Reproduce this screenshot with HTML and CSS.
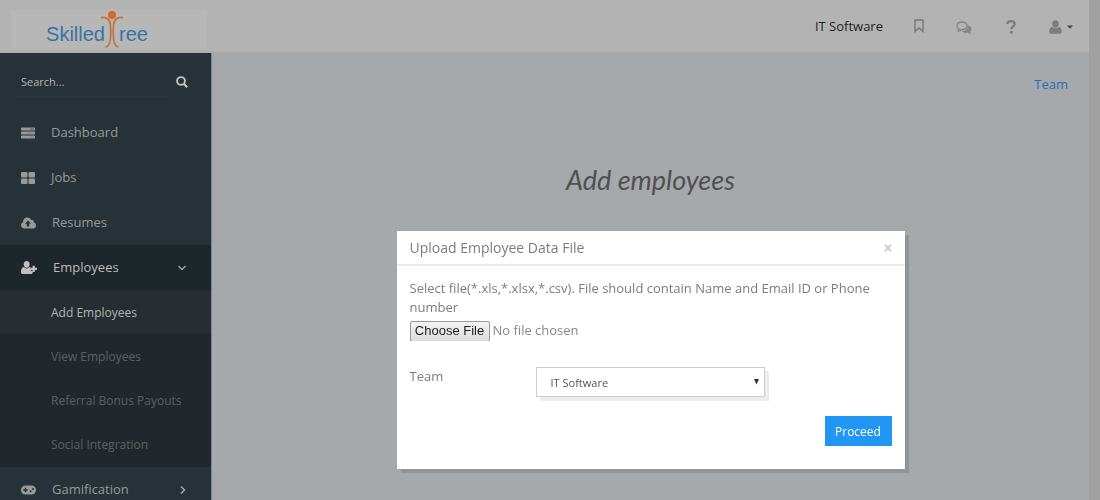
FILE: index.html
```html
<!DOCTYPE html>
<html lang="en">
<head>
<meta charset="utf-8">
<title>SkilledTree - Add employees</title>
<link rel="stylesheet" href="styles.css">
</head>
<body>
<div class="app">
  <div class="page">
    <header class="topbar">
      <a class="logo" href="#" aria-label="SkilledTree">
        <span>Skilled</span>
        <svg class="logo-figure" viewBox="0 0 22 38" aria-hidden="true">
          <circle cx="11" cy="5" r="4" fill="#d9691f"/>
          <path d="M0 7.500C5 7 8.500 9 9.300 14C10 20 10 28 8.500 33C7.500 36 6 37 4.500 37" fill="none" stroke="#c4743c" stroke-width="1.700"/>
          <path d="M22 7.500C17 7 13.500 9 12.700 14C12 20 12 28 13.500 33C14.500 36 16 37 17.500 37" fill="none" stroke="#c4743c" stroke-width="1.700"/>
        </svg>
        <span>ree</span>
      </a>
      <nav class="tools" aria-label="Account">
        <span class="org">IT Software</span>
        <a href="#" class="tool tool-mark" aria-label="Bookmarks"><svg width="10" height="14" viewBox="0 0 10 14"><path d="M1 1H9V12.500L5 9L1 12.500Z" fill="none" stroke="#777" stroke-width="1.400"/></svg></a>
        <a href="#" class="tool tool-chat" aria-label="Messages"><svg width="16" height="14" viewBox="0 0 16 14"><path d="M12.200 4.500C14.200 5 15.500 6.200 15.500 8C15.500 9.200 14.900 10.100 13.900 10.800L15 13C13.300 12.900 12.300 12.300 11.600 11.600C9 12 6.800 11.300 5.800 10.200C9.500 10.200 12.500 8 12.200 4.500Z" fill="#858585"/><path d="M6 1C3 1 1 2.700 1 4.900C1 6.300 1.800 7.300 3 8L2.100 10C3.600 9.800 4.400 9.300 5.100 8.700C8.600 9 11.200 7.300 11.200 4.900C11.200 2.700 9 1 6 1Z" fill="#b3b3b3" stroke="#858585" stroke-width="1.300"/></svg></a>
        <a href="#" class="tool tool-help" aria-label="Help"><svg width="10" height="14" viewBox="0 0 10 14"><path d="M1.200 4.200C1.500 2 3 1.200 5 1.200C7.200 1.200 8.700 2.300 8.700 4C8.700 6.600 5.300 6.400 5.300 9.300" fill="none" stroke="#7d7d7d" stroke-width="2.300"/><rect x="4" y="11" width="2.700" height="2.700" fill="#7d7d7d"/></svg></a>
        <a href="#" class="tool tool-user" aria-label="Profile"><svg width="13" height="14" viewBox="0 0 13 14"><path d="M6.500 0.300C8.500 0.300 9.800 1.800 9.800 3.900C9.800 6 8.400 7.800 6.500 7.800C4.600 7.800 3.200 6 3.200 3.900C3.200 1.800 4.500 0.300 6.500 0.300ZM3.300 6.700C4.800 8.900 8.200 8.900 9.700 6.700C12 7 12.700 9.200 12.700 11.600C12.700 13 11.900 13.800 10.700 13.800H2.300C1.100 13.800 0.300 13 0.300 11.600C0.300 9.200 1 7 3.300 6.700Z" fill="#7d7d7d"/></svg><svg width="6" height="4" viewBox="0 0 6 4"><path d="M0 0.500H6L3 3.700Z" fill="#444"/></svg></a>
      </nav>
    </header>

    <div class="columns">
      <aside class="sidebar">
        <form class="search" role="search">
          <input class="search-field" type="text" placeholder="Search..." aria-label="Search">
          <button class="search-button" type="button" aria-label="Search"><svg width="12" height="12" viewBox="0 0 12 12"><circle cx="5" cy="5" r="3.900" fill="none" stroke="#c4c4c4" stroke-width="1.900"/><path d="M8 8L11.200 11.200" stroke="#c4c4c4" stroke-width="2.200"/></svg></button>
        </form>
        <nav aria-label="Main">
          <a class="item" href="#"><svg width="14" height="12" viewBox="0 0 15 12"><g fill="#989a9a"><rect width="15" height="3.400" rx=".5"/><rect y="4.300" width="15" height="3.400" rx=".5"/><rect y="8.600" width="15" height="3.400" rx=".5"/></g><path d="M10 1.700H14" stroke="#4c565a" stroke-width="1"/><path d="M6 6H14M10 10.300H14" stroke="#858a8b" stroke-width="1"/></svg>Dashboard</a>
          <a class="item" href="#"><svg width="14" height="12" viewBox="0 0 14 12"><g fill="#989a9a"><rect width="6.500" height="5.500" rx="1"/><rect x="7.500" width="6.500" height="5.500" rx="1"/><rect y="6.500" width="6.500" height="5.500" rx="1"/><rect x="7.500" y="6.500" width="6.500" height="5.500" rx="1"/></g></svg>Jobs</a>
          <a class="item" href="#"><svg width="15" height="12" viewBox="0 0 15 12"><path d="M3.500 11.500C1.500 11.500 0 10.200 0 8.300C0 6.800 0.800 5.800 2 5.200C1.900 2.500 3.800 0.500 6.300 0.500C8.300 0.500 9.700 1.600 10.300 3.200C12 2.600 13.300 4 12.800 5.600C14.200 6 15 7.100 15 8.500C15 10.300 13.700 11.500 12 11.500Z" fill="#989a9a"/><path d="M7 3.500L10 6.700H8.200V9.500H5.800V6.700H4Z" fill="#263238"/></svg>Resumes</a>
          <a class="item item-open" href="#" aria-expanded="true"><svg width="16" height="13" viewBox="0 0 16 13"><path d="M5.700 0C7.500 0 8.700 1.300 8.700 3.200C8.700 5 7.500 6.700 5.700 6.700C4 6.700 2.700 5 2.700 3.200C2.700 1.300 4 0 5.700 0ZM2.900 6C4.500 7.900 7 7.900 8.500 6C9 6 9.400 6.200 9.700 6.500V9.700H11.700V12C11.400 12.600 10.600 13 9.800 13H1.900C0.700 13 0 12.200 0 10.900C0 8.700 0.700 6.200 2.900 6Z" fill="#c0bebe"/><path d="M12.700 4.700V11.100M9.500 7.900H16" stroke="#c0bebe" stroke-width="2.300"/></svg>Employees<svg class="arrow" width="8" height="6" viewBox="0 0 8 6"><path d="M.5 1L4 4.500L7.500 1" fill="none" stroke="#a4a7a8" stroke-width="1.300"/></svg></a>
          <div class="submenu">
            <a class="subitem current" href="#">Add Employees</a>
            <a class="subitem" href="#">View Employees</a>
            <a class="subitem" href="#">Referral Bonus Payouts</a>
            <a class="subitem" href="#">Social Integration</a>
          </div>
          <a class="item" href="#"><svg width="15" height="10" viewBox="0 0 15 10"><rect y=".5" width="15" height="9" rx="4.500" fill="#989a9a"/><path d="M4.500 2.800V7.200M2.300 5H6.700" stroke="#263238" stroke-width="1.400"/><circle cx="9.700" cy="6.300" r="1" fill="#263238"/><circle cx="12" cy="3.900" r="1" fill="#263238"/></svg>Gamification<svg class="arrow" width="6" height="8" viewBox="0 0 6 8"><path d="M1 .5L4.500 4L1 7.500" fill="none" stroke="#a4a7a8" stroke-width="1.500"/></svg></a>
        </nav>
      </aside>
      <main class="main">
        <a class="crumb" href="#">Team</a>
        <h1 class="title">Add employees</h1>
      </main>
    </div>
  </div>
  <div class="gutter"></div>
</div>

<div class="overlay">
  <section class="dialog" role="dialog" aria-labelledby="dialog-title">
    <div class="dialog-head">
      <h2 class="dialog-title" id="dialog-title">Upload Employee Data File</h2>
      <button class="close" type="button" aria-label="Close"><svg width="8" height="8" viewBox="0 0 8 8"><path d="M.8 .8L7.200 7.200M7.200 .8L.8 7.200" stroke="#c2c2c2" stroke-width="1.500"/></svg></button>
    </div>
    <form class="dialog-body">
      <label class="hint" for="file">Select file(*.xls,*.xlsx,*.csv). File should contain Name and Email ID or Phone number</label>
      <input class="file" id="file" type="file">
      <div class="field">
        <label for="team">Team</label>
        <div class="select-wrap">
          <select class="select" id="team"><option>IT Software</option></select>
          <svg class="select-arrow" width="5" height="6" viewBox="0 0 5 6" aria-hidden="true"><path d="M0 0H5L2.500 5.500Z" fill="#333"/></svg>
        </div>
      </div>
      <button class="proceed" type="button">Proceed</button>
    </form>
  </section>
</div>
</body>
</html>
```

FILE: styles.css
```css
* { box-sizing: border-box; }

body {
  margin: 0;
  font: 13px/19px "Open Sans", "Noto Sans", sans-serif;
  color: #7c7c7c;
}

a { color: inherit; text-decoration: none; }
button, input, select { font: inherit; }
svg { display: block; flex: none; }

.app { display: flex; height: 100vh; overflow: hidden; }
.page { flex: 1; display: flex; flex-direction: column; min-width: 0; }
.gutter { width: 11px; background: #a1a1a1; }

.topbar {
  flex: none;
  display: flex;
  justify-content: space-between;
  height: 53px;
  background: #b3b3b3;
  border-bottom: 1px solid #a9abac;
}

.logo {
  display: flex;
  align-items: center;
  justify-content: center;
  width: 196px;
  height: 38px;
  margin: 10px 0 0 11px;
  padding: 10px 24px 0 0;
  background: #b7b7b7;
  color: #3a72a4;
  font: 20px/28px "Liberation Sans", sans-serif;
}
.logo-figure { width: 22px; height: 38px; margin: 0 -4px; align-self: flex-end; }

.tools { display: flex; align-items: center; padding-right: 16px; }
.org { color: #222; margin-right: 31px; }
.tool { display: flex; align-items: center; }
.tool-mark { margin-right: 32px; }
.tool-chat { margin-right: 34px; padding-top: 4px; }
.tool-help { margin-right: 33px; padding-top: 2px; }
.tool-user { gap: 5px; padding-top: 2px; }

.columns { flex: 1; display: flex; min-height: 0; }

.sidebar {
  flex: none;
  width: 212px;
  overflow: hidden;
  background: #263238;
  border-right: 1px solid #7e8487;
}

.search { display: flex; align-items: center; height: 57px; padding: 0 23px 0 12px; }
.search-field {
  flex: 1;
  min-width: 0;
  height: 30px;
  margin-right: 10px;
  padding: 0 9px;
  border: 0;
  border-bottom: 1px solid #2a363c;
  background: none;
  color: #b5b5b5;
  font-size: 11px;
}
.search-field::placeholder { color: #b5b5b5; opacity: 1; }
.search-button { padding: 0; border: 0; background: none; }

.item {
  display: flex;
  align-items: center;
  gap: 16px;
  height: 45px;
  padding: 0 25px 0 21px;
  color: #989a9a;
}
.item-open { background: #1d262b; color: #bbb; }
.arrow { margin-left: auto; }

.submenu { padding-bottom: 1px; background: #20282d; }
.subitem { display: flex; align-items: center; height: 44px; padding-left: 51px; color: #5c6062; font-size: 12px; }
.current { background: #262e33; color: #b4b4b4; }

.main { flex: 1; display: flex; flex-direction: column; background: #a5a9ac; }
.crumb { align-self: flex-end; padding: 22px 21px 0 0; color: #2a6db0; }
.title {
  margin: 68px 0 0;
  text-align: center;
  color: #505050;
  font: italic 27px/36px Lato, sans-serif;
}

.overlay {
  position: fixed;
  inset: 0;
  display: flex;
  align-items: flex-start;
  justify-content: center;
  padding: 231px 11px 0 212px;
}
.dialog {
  width: 508px;
  background: #fff;
  box-shadow: 4px 4px 0 #919597;
}
.dialog-head {
  display: flex;
  align-items: center;
  justify-content: space-between;
  padding: 7px 13px;
  border-bottom: 2px solid #ebebeb;
}
.dialog-title { margin: 0; font-size: 14px; font-weight: 400; }
.close { padding: 0; border: 0; background: none; }
.dialog-body { display: flex; flex-direction: column; padding: 13px 13px 23px; }
.hint { margin-bottom: 3px; }

.file { align-self: flex-start; width: 260px; height: 21px; line-height: 21px; color: #888; }
.file::file-selector-button {
  width: 80px;
  height: 21px;
  margin: 0 3px 0 0;
  padding: 0;
  border: 1px solid #999;
  border-radius: 2px;
  background: linear-gradient(#f3f3f3, #dcdcdc);
  color: #222;
  font: 13px/18px "Liberation Sans", sans-serif;
}

.field { display: flex; margin-top: 26px; }
.field label { width: 126px; }
.select-wrap { position: relative; width: 229px; }
.select {
  display: block;
  width: 100%;
  height: 30px;
  padding: 0 14px;
  appearance: none;
  border: 1px solid #ccc;
  border-radius: 0;
  background: #fff;
  box-shadow: 4px 4px 0 #ededed;
  color: #555;
  font-size: 11px;
}
.select-arrow { position: absolute; right: 6px; top: 12px; pointer-events: none; }

.proceed {
  align-self: flex-end;
  width: 67px;
  height: 30px;
  margin-top: 19px;
  padding: 0;
  border: 0;
  background: #2196f3;
  color: #fff;
  font-size: 12px;
}
```
